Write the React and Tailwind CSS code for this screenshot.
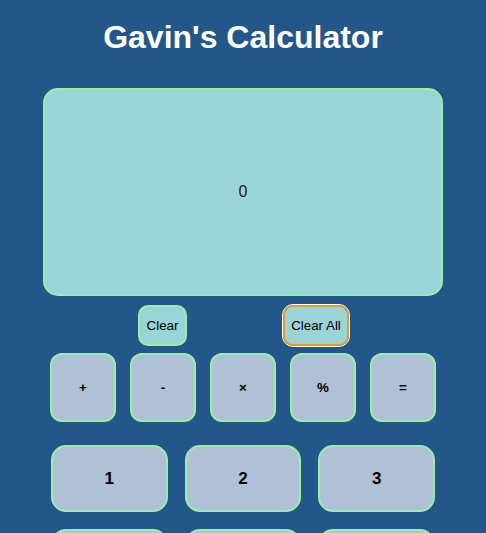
import React, { useState } from 'react';

// Simple calculator layout
const operators = ['+', '-', '×', '%', '='];
const numberRows = [
  ['1', '2', '3'],
  ['4', '5', '6'],
  ['7', '8', '9'],
];

const App = () => {
  const [display] = useState('0');

  return (
    <div
      className="min-h-screen bg-[#235789] overflow-hidden"
      style={{ fontFamily: '"Liberation Sans", Arial, sans-serif' }}
    >
      <h1 className="pt-[19px] text-center text-[32px] font-bold leading-[37px] text-white">
        Gavin's Calculator
      </h1>

      <div className="mx-auto mt-[32px] w-[400px]">
        {/* display */}
        <div className="flex h-[208px] items-center justify-center rounded-[15px] border-2 border-[#98f0a8] bg-[#9bd4d6] text-[16px] text-[#1a1a1a]">
          {display}
        </div>

        {/* clear buttons */}
        <div className="mt-[9px] flex h-[41px] pl-[95px] gap-[96px]">
          <button className="w-[49px] rounded-[10px] border-2 border-[#98f0a8] bg-[#9bd4d6] text-[13.33px] text-black">
            Clear
          </button>
          <button className="w-[66px] rounded-[10px] border-2 border-[#e89c1c] bg-[#9bd4d6] text-[13.33px] text-black outline outline-1 outline-white">
            Clear All
          </button>
        </div>

        {/* operators */}
        <div className="mx-auto mt-[7px] grid w-[386px] grid-cols-5 gap-[14px]">
          {operators.map((op) => (
            <button
              key={op}
              className="h-[69px] rounded-[12px] border-2 border-[#98f0a8] bg-[#b0c1d6] text-[13.33px] font-bold text-black"
            >
              {op}
            </button>
          ))}
        </div>

        {/* numbers */}
        <div className="ml-[8px] mt-[23px] flex w-[384px] flex-col gap-[17px]">
          {numberRows.map((row, i) => (
            <div key={i} className="grid grid-cols-3 gap-[17px]">
              {row.map((n) => (
                <button
                  key={n}
                  className="h-[67px] rounded-[15px] border-2 border-[#98f0a8] bg-[#b0c1d6] text-[17px] font-bold text-black"
                >
                  {n}
                </button>
              ))}
            </div>
          ))}
        </div>
      </div>
    </div>
  );
};

export default App;
